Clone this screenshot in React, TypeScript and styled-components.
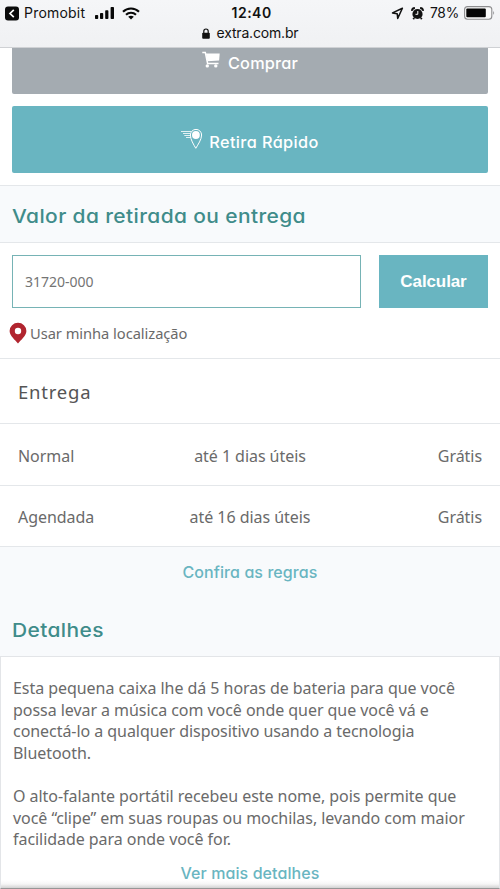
import React from "react";
import styled, { createGlobalStyle } from "styled-components";

const teal = "#69b5c1";
const line = "#e4e7ea";
const rounded = `font-family: Inter, "Noto Sans", sans-serif; font-feature-settings: "cv11"; font-weight: 500;`;

const GlobalStyle = createGlobalStyle`
  * { box-sizing: border-box; }
  body { margin: 0; background: #fff; }
`;

const Screen = styled.div`
  display: flex;
  flex-direction: column;
  width: 500px;
  height: 889px;
  overflow: hidden;
  background: #fff;
  color: #6a6a6a;
  font: 400 16px/22px "Noto Sans", sans-serif;
  letter-spacing: -0.05px;
  white-space: nowrap;
`;

const BrowserBar = styled.header`
  flex: none;
  height: 48px;
  background: linear-gradient(#f5f6f8, #f0f1f3);
  border-bottom: 1px solid #cfd1d4;
  color: #111;
  font: 400 14px/18px Inter, sans-serif;
  letter-spacing: 0.1px;
`;

const StatusRow = styled.div`
  display: grid;
  grid-template-columns: 1fr 42px 1fr;
  align-items: center;
  height: 26px;
  padding: 0 5px 0 4px;
`;

const StatusGroup = styled.div<{ $end?: boolean }>`
  display: flex;
  align-items: center;
  justify-content: ${(p) => (p.$end ? "flex-end" : "flex-start")};

  svg { flex: none; }
`;

const BackLabel = styled.span`
  margin: 0 10px 0 5px;
  letter-spacing: 0.2px;
`;

const Gap = styled.span<{ $w: number }>`
  flex: none;
  width: ${(p) => p.$w}px;
`;

const Clock = styled.span`
  margin-left: 3px;
  font-weight: 600;
  letter-spacing: 0.5px;
`;

const Percent = styled.span`
  margin: 0 5px 0 6px;
  font-size: 13.8px;
  letter-spacing: -0.2px;
`;

const AddressRow = styled.div`
  display: flex;
  justify-content: center;
  align-items: center;
  gap: 7px;
  height: 14px;
  letter-spacing: -0.18px;
`;

const Actions = styled.div`
  flex: none;
  display: flex;
  flex-direction: column;
  gap: 12px;
  height: 137px;
  padding: 0 12px;
`;

const ActionButton = styled.button<{ $cut?: boolean }>`
  display: flex;
  justify-content: center;
  align-items: flex-start;
  gap: ${(p) => (p.$cut ? 8 : 6)}px;
  height: ${(p) => (p.$cut ? 46 : 67)}px;
  padding: ${(p) => (p.$cut ? "2px 0 0" : "22px 0 0")};
  border: 0;
  border-radius: ${(p) => (p.$cut ? "0 0 2px 2px" : "2px")};
  background: ${(p) => (p.$cut ? "#a4abb1" : teal)};
  color: #fff;
  ${rounded}
  font-size: 16.3px;
  line-height: 22px;
  letter-spacing: ${(p) => (p.$cut ? 0.2 : 0.4)}px;

  span { padding-top: ${(p) => (p.$cut ? 2 : 3)}px; }
`;

const SectionTitle = styled.h2`
  width: max-content;
  margin: 0;
  color: #3f8c8a;
  ${rounded}
  font-weight: 450;
  font-size: 18.8px;
  line-height: 24px;
  letter-spacing: 0.35px;
  transform: scaleX(1.115);
  transform-origin: left;
`;

const TitleBar = styled.div`
  flex: none;
  height: 58px;
  padding: 19px 12px 0;
  background: #f8fafc;
  border: solid ${line};
  border-width: 1px 0;
`;

const ZipArea = styled.div`
  flex: none;
  height: 116px;
  padding: 12px 12px 0;
  border-bottom: 1px solid ${line};
`;

const ZipForm = styled.div`
  display: grid;
  grid-template-columns: 349px 109px;
  justify-content: space-between;
  height: 53px;
`;

const ZipInput = styled.input`
  padding: 0 12px;
  border: 1px solid #76b3b5;
  border-radius: 0;
  background: #fff;
  color: #747474;
  font: 400 14px "Noto Sans", sans-serif;
  outline: none;
`;

const Calculate = styled.button`
  padding: 0;
  border: 0;
  background: ${teal};
  color: #fff;
  font: 700 17px "Liberation Sans", Arial, sans-serif;
  letter-spacing: -0.1px;
`;

const UseLocation = styled.div`
  display: flex;
  align-items: center;
  gap: 3px;
  margin: 14px 0 0 -3px;
  font-size: 14.7px;
  height: 22px;
`;

const TableHead = styled.h3`
  flex: none;
  height: 65px;
  margin: 0;
  padding: 0 18px 1px;
  border-bottom: 1px solid ${line};
  color: #555;
  font-size: 18.5px;
  font-weight: 400;
  line-height: 65px;
  letter-spacing: 0.8px;
`;

const DeliveryRow = styled.div<{ $h: number }>`
  flex: none;
  display: grid;
  grid-template-columns: 1fr 140px 1fr;
  align-items: center;
  height: ${(p) => p.$h}px;
  padding: 2px 18px 0;
  border-bottom: 1px solid ${line};
`;

const Cell = styled.span<{ $align: string }>`
  text-align: ${(p) => p.$align};
`;

const Link = styled.a`
  display: block;
  color: ${teal};
  ${rounded}
  font-size: 16px;
  line-height: 22px;
  letter-spacing: 0.08px;
  text-align: center;
`;

const Rules = styled.div`
  flex: none;
  height: 109px;
  padding: 14px 12px 0;
  background: #f8fafc;

  ${SectionTitle} { margin-top: 36px; }
`;

const Details = styled.section`
  flex: 1;
  padding: 21px 12px 0;
  border: 1px solid #e3e5e8;
  border-bottom: 1px solid #969696;
  background: linear-gradient(to top, #d2d2d2, #f6f6f6 4px, #fff 8px);
`;

const Paragraph = styled.p`
  margin: 0 0 21.6px;
  line-height: 21.6px;

  &:last-of-type { margin-bottom: 11.7px; }
`;

const BackIcon = () => (
  <svg width="15" height="15" viewBox="0 0 15 15">
    <rect x="1" y="0.5" width="14" height="14" rx="3" fill="#0b0b0b" />
    <path d="M9.8 3.8 6 7.5l3.8 3.7" fill="none" stroke="#fff" strokeWidth="1.7" />
  </svg>
);

const SignalIcon = () => (
  <svg width="20" height="13" viewBox="0 0 20 13" fill="#080808">
    <rect x="0" y="8" width="3.2" height="4" rx="0.8" />
    <rect x="5" y="6" width="3.2" height="6" rx="0.8" />
    <rect x="10.2" y="3.3" width="3.2" height="8.7" rx="0.8" />
    <rect x="15.6" y="0" width="3.4" height="12" rx="0.8" />
  </svg>
);

const WifiIcon = () => (
  <svg width="18" height="13" viewBox="0 0 18 13" fill="none" stroke="#080808" strokeWidth="2.1">
    <path d="M1 4.8C5.4.4 12.6.4 17 4.8" />
    <path d="M4 7.8c2.8-2.7 7.2-2.7 10 0" />
    <path d="M6.2 9.7c1.6-1.4 4-1.4 5.6 0L9 12.6z" fill="#080808" stroke="none" />
  </svg>
);

const ArrowIcon = () => (
  <svg width="13" height="13" viewBox="0 0 13 13">
    <path d="M11.4 1.3 1.5 5.9l4.7.8.5 4.7z" fill="none" stroke="#111" strokeWidth="1.5" strokeLinejoin="round" />
  </svg>
);

const AlarmIcon = () => (
  <svg width="13" height="13" viewBox="0 0 13 13">
    <circle cx="6.5" cy="7" r="5.1" fill="#111" />
    <path d="M1 3.9Q.9 1.3 3.9 1M9.1 1q3 .3 2.9 2.9M3.2 11l-1 1.2M9.8 11l1 1.2" fill="none" stroke="#111" strokeWidth="1.9" />
    <path d="M6.8 4v3.3H4.5" fill="none" stroke="#fff" strokeWidth="1" />
  </svg>
);

const BatteryIcon = () => (
  <svg width="31" height="14" viewBox="0 0 31 14">
    <rect x="0.6" y="0.6" width="27.2" height="12.6" rx="3" fill="#fafafa" stroke="#8d8d8f" strokeWidth="1.1" />
    <rect x="2.3" y="2.5" width="19.5" height="8.8" rx="1" fill="#050505" />
    <path d="M29.2 4.8q1.8 2.1 0 4.2z" fill="#8d8d8f" />
  </svg>
);

const LockIcon = () => (
  <svg width="8" height="11" viewBox="0 0 8 11">
    <rect x="0.2" y="4.7" width="7.6" height="6" rx="0.9" fill="#111" />
    <path d="M1.8 5V3.2a2.2 2.2 0 0 1 4.4 0V5" fill="none" stroke="#111" strokeWidth="1.2" />
  </svg>
);

const CartIcon = () => (
  <svg width="18" height="18" viewBox="0 0 18 18">
    <path d="M3.8 3.4h13.9l-.6 7-11.7.9z" fill="#fff" />
    <path d="M.3 2.4h3l2.3 11h10.9" fill="none" stroke="#fff" strokeWidth="1.5" />
    <circle cx="5.3" cy="15.9" r="1.7" fill="#fff" />
    <circle cx="13.8" cy="15.9" r="1.7" fill="#fff" />
  </svg>
);

const FastPinIcon = () => (
  <svg width="22" height="22" viewBox="0 0 22 22" fill="none" stroke="#fff">
    <path d="M0 3.5h10M2 5.5h7M3.3 7.5h6M5 9.5h5" strokeWidth=".8" />
    <path d="M14.8 20.3C12.6 16.5 9.4 11.5 9.4 7a5.6 5.6 0 0 1 11.2 0c0 4.5-3.6 9.5-5.8 13.3z" fill={teal} strokeWidth="1" />
    <circle cx="14.9" cy="7" r="3.9" fill="#fff" stroke="none" />
  </svg>
);

const PinIcon = () => (
  <svg width="18" height="22" viewBox="0 0 18 22">
    <path d="M9 21.4C6.5 18.2.6 14 .6 9a8.4 8.2 0 0 1 16.800 0C17.4 14 11.5 18.2 9 21.4z" fill="#b1252f" />
    <circle cx="9" cy="9" r="3.2" fill="#fff" />
  </svg>
);

const deliveries = [
  { name: "Normal", time: "até 1 dias úteis", price: "Grátis", height: 62 },
  { name: "Agendada", time: "até 16 dias úteis", price: "Grátis", height: 61 },
];

export default function App() {
  return (
    <Screen>
      <GlobalStyle />
      <BrowserBar>
        <StatusRow>
          <StatusGroup>
            <BackIcon />
            <BackLabel>Promobit</BackLabel>
            <SignalIcon />
            <Gap $w={7} />
            <WifiIcon />
          </StatusGroup>
          <Clock>12:40</Clock>
          <StatusGroup $end>
            <ArrowIcon />
            <Gap $w={7} />
            <AlarmIcon />
            <Percent>78%</Percent>
            <BatteryIcon />
          </StatusGroup>
        </StatusRow>
        <AddressRow>
          <LockIcon />
          <span>extra.com.br</span>
        </AddressRow>
      </BrowserBar>

      <Actions>
        <ActionButton $cut>
          <CartIcon />
          <span>Comprar</span>
        </ActionButton>
        <ActionButton>
          <FastPinIcon />
          <span>Retira Rápido</span>
        </ActionButton>
      </Actions>

      <TitleBar>
        <SectionTitle>Valor da retirada ou entrega</SectionTitle>
      </TitleBar>
      <ZipArea>
        <ZipForm>
          <ZipInput defaultValue="31720-000" />
          <Calculate>Calcular</Calculate>
        </ZipForm>
        <UseLocation>
          <PinIcon />
          <span>Usar minha localização</span>
        </UseLocation>
      </ZipArea>

      <TableHead>Entrega</TableHead>
      {deliveries.map((d) => (
        <DeliveryRow key={d.name} $h={d.height}>
          <Cell $align="left">{d.name}</Cell>
          <Cell $align="center">{d.time}</Cell>
          <Cell $align="right">{d.price}</Cell>
        </DeliveryRow>
      ))}

      <Rules>
        <Link>Confira as regras</Link>
        <SectionTitle>Detalhes</SectionTitle>
      </Rules>
      <Details>
        <Paragraph>
          Esta pequena caixa lhe dá 5 horas de bateria para que você
          <br />
          possa levar a música com você onde quer que você vá e
          <br />
          conectá-lo a qualquer dispositivo usando a tecnologia
          <br />
          Bluetooth.
        </Paragraph>
        <Paragraph>
          O alto-falante portátil recebeu este nome, pois permite que
          <br />
          você “clipe” em suas roupas ou mochilas, levando com maior
          <br />
          facilidade para onde você for.
        </Paragraph>
        <Link>Ver mais detalhes</Link>
      </Details>
    </Screen>
  );
}
